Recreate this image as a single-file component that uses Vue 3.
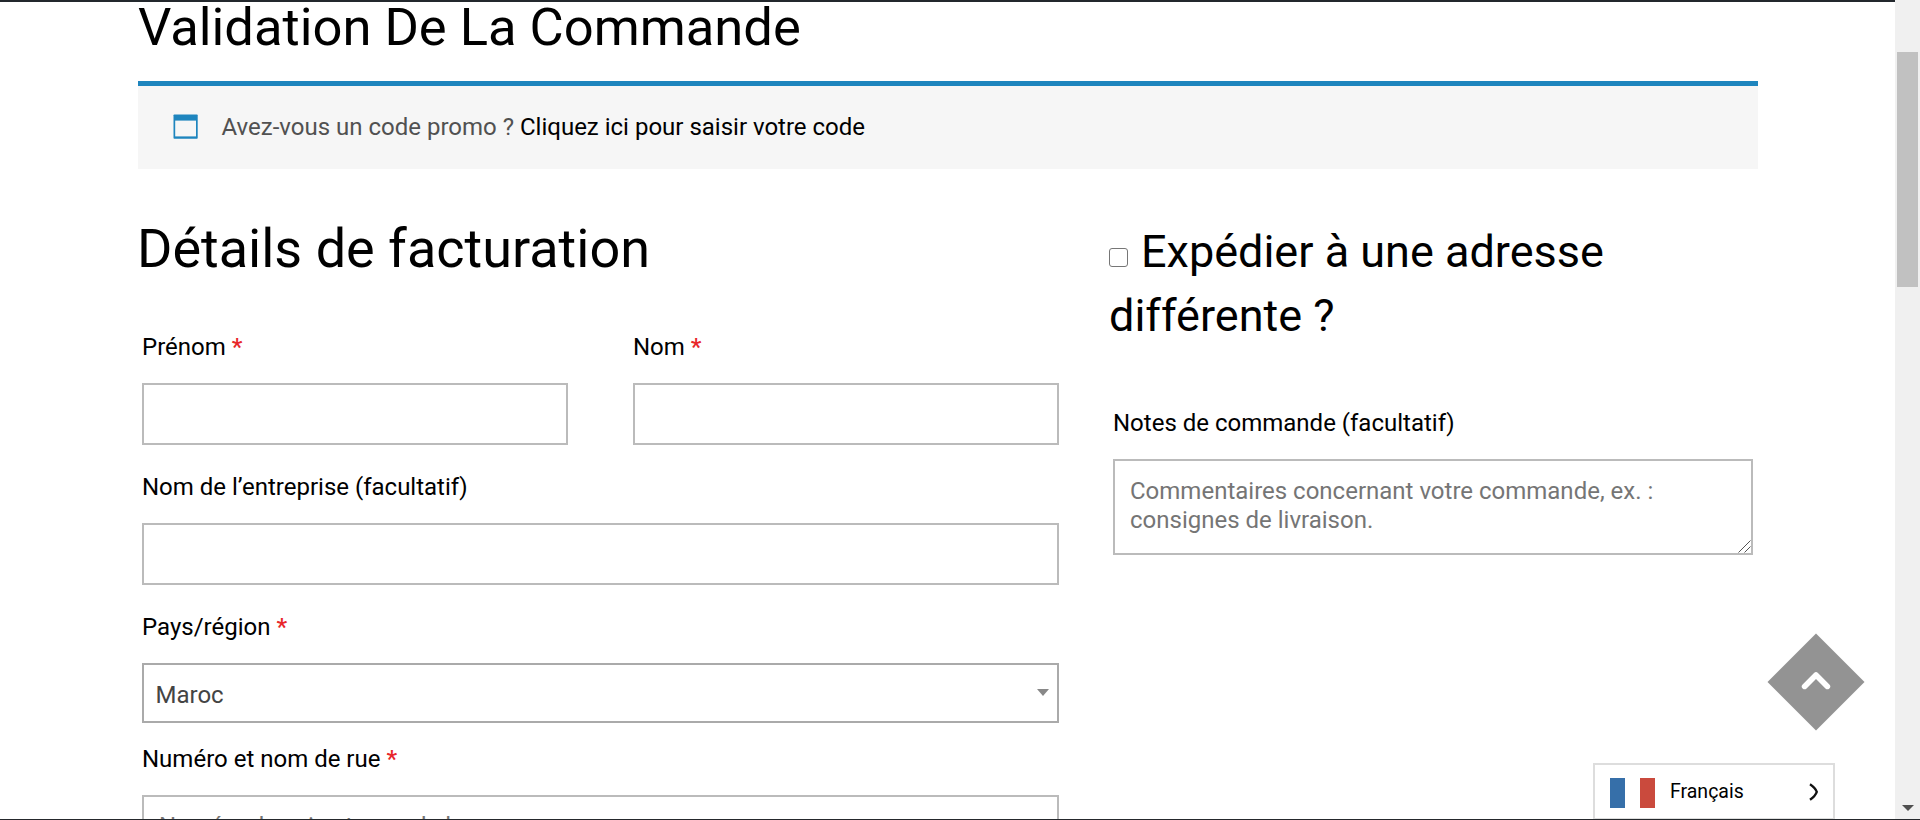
<script setup>
const streetHint = 'Numéro de voie et nom de la rue'
const notesHint = 'Commentaires concernant votre commande, ex. : consignes de livraison.'
</script>

<template>
  <div class="window">
    <div class="page">
      <main class="content">
        <h1 class="title">Validation De La Commande</h1>

        <div class="notice">
          <svg class="notice-icon" width="26" height="26" viewBox="0 0 26 26">
            <rect x="0.5" y="0.5" width="24.2" height="24.2" rx="0.8" fill="#1e85be" />
            <rect x="2.2" y="6.6" width="20.8" height="15.8" fill="#f6f6f6" />
          </svg>
          <p class="notice-text">Avez-vous un code promo ? <a>Cliquez ici pour saisir votre code</a></p>
        </div>

        <div class="columns">
          <section class="billing">
            <h2 class="billing-title">Détails de facturation</h2>
            <div class="pair">
              <div class="field">
                <label>Prénom <b>*</b></label>
                <input type="text" />
              </div>
              <div class="field">
                <label>Nom <b>*</b></label>
                <input type="text" />
              </div>
            </div>
            <div class="field">
              <label>Nom de l’entreprise (facultatif)</label>
              <input type="text" />
            </div>
            <div class="field country">
              <label>Pays/région <b>*</b></label>
              <div class="select">
                <span>Maroc</span>
                <svg width="12" height="7" viewBox="0 0 12 7"><path d="M0 0H12L6 7Z" fill="#888" /></svg>
              </div>
            </div>
            <div class="field">
              <label>Numéro et nom de rue <b>*</b></label>
              <input type="text" :placeholder="streetHint" />
            </div>
          </section>

          <section class="shipping">
            <h3 class="shipping-title"><i class="check"></i>Expédier à une adresse<br />différente ?</h3>
            <div class="field notes">
              <label>Notes de commande (facultatif)</label>
              <textarea :placeholder="notesHint"></textarea>
              <svg class="grip" width="13" height="13" viewBox="0 0 13 13" stroke="#555" stroke-width="1">
                <path d="M0.5 12.5L12.5 0.5M6.5 12.5L12.5 6.5" />
              </svg>
            </div>
          </section>
        </div>
      </main>
    </div>

    <aside class="scrollbar">
      <div class="thumb"></div>
      <svg class="scroll-down" width="12" height="6" viewBox="0 0 12 6"><path d="M0 0H12L6 6Z" fill="#505050" /></svg>
    </aside>

    <div class="topbar"></div>

    <svg class="to-top" width="98" height="98" viewBox="0 0 98 98">
      <path d="M49 0.5L97.5 49L49 97.5L0.5 49Z" fill="#939393" />
      <path d="M37.6 53.4L49 42L60.4 53.4" fill="none" stroke="#fff" stroke-width="5.6" stroke-linecap="round" stroke-linejoin="round" />
    </svg>

    <div class="lang">
      <svg class="flag" width="45" height="30" viewBox="0 0 45 30">
        <path d="M0 0H15V30H0Z" fill="#366fa9" />
        <path d="M15 0H30V30H15Z" fill="#fff" />
        <path d="M30 0H45V30H30Z" fill="#ca4a3d" />
      </svg>
      <span class="lang-name">Français</span>
      <svg class="lang-arrow" width="10" height="18" viewBox="0 0 10 18">
        <path d="M1 1.2C4 3.2 6.8 6 7.8 8.8C6.8 11.8 4 14.6 1 16.8" fill="none" stroke="#111" stroke-width="2.3" />
      </svg>
    </div>

    <div class="bottom-edge"></div>
  </div>
</template>

<style>
html,
body {
  margin: 0;
  overflow: hidden;
}
</style>

<style scoped>
.window {
  position: relative;
  display: flex;
  width: 1920px;
  height: 820px;
  overflow: hidden;
  background: #fff;
  color: #000;
  font-family: Roboto, "Liberation Sans", sans-serif;
  font-size: 24px;
}
.page {
  flex: 1;
  height: 820px;
  overflow: hidden;
}
.content {
  width: 1620px;
  margin-left: 138px;
}
h1,
h2,
h3,
p {
  margin: 0;
  font-weight: 400;
}
.title {
  font-size: 52.5px;
  line-height: 54px;
  white-space: nowrap;
}
.notice {
  display: flex;
  box-sizing: border-box;
  height: 88px;
  margin-top: 27px;
  padding: 24px 0 0 35px;
  border-top: 5px solid #1e85be;
  background: #f6f6f6;
}
.notice-icon {
  margin-top: 4px;
}
.notice-text {
  margin-left: 22.5px;
  line-height: 36px;
  margin-top: -1px;
  color: #515151;
}
.notice-text a {
  color: #000;
}
.columns {
  display: flex;
  gap: 49px;
}
.billing {
  width: 917px;
  margin-left: 4px;
}
.billing-title {
  margin: 50px 0 48px -5px;
  font-size: 54px;
  line-height: 60px;
}
.pair {
  display: grid;
  grid-template-columns: 426px 426px;
  justify-content: space-between;
}
.field {
  display: flex;
  flex-direction: column;
  margin-bottom: 22px;
}
.field.country {
  margin-bottom: 16px;
}
label {
  height: 40px;
  margin-bottom: 16px;
  line-height: 40px;
  white-space: nowrap;
}
label b {
  color: #e8262a;
  font-weight: 500;
}
input,
textarea,
.select {
  box-sizing: border-box;
  width: 100%;
  margin: 0;
  border: 2px solid #bbb;
  border-radius: 0;
  background: #fff;
  color: #000;
  font: 24px Roboto, "Liberation Sans", sans-serif;
  outline: none;
}
input {
  height: 62px;
  padding: 0 15px;
}
input::placeholder,
textarea::placeholder {
  color: #757575;
  opacity: 1;
}
.select {
  display: flex;
  align-items: center;
  justify-content: space-between;
  height: 60px;
  padding: 0 8px 0 11.5px;
  border-color: #aaa;
  color: #444;
}
.select span {
  padding-top: 3px;
}
.select svg {
  margin-bottom: 2px;
}
.shipping {
  width: 648px;
  margin-top: 51px;
}
.shipping-title {
  height: 128px;
  margin-left: 1px;
  font-size: 45px;
  line-height: 64px;
  white-space: nowrap;
}
.check {
  display: inline-block;
  box-sizing: border-box;
  width: 19px;
  height: 19px;
  margin-right: 13px;
  border: 1px solid #767676;
  border-radius: 3px;
  background: #fff;
  vertical-align: 0;
}
.notes {
  position: relative;
  width: 640px;
  margin: 55px 0 0 5px;
}
textarea {
  height: 96px;
  padding: 16px 15px 0;
  line-height: 29px;
  resize: none;
  overflow: hidden;
}
.grip {
  position: absolute;
  right: 2px;
  bottom: 2px;
}
.scrollbar {
  display: flex;
  flex-direction: column;
  align-items: center;
  justify-content: space-between;
  box-sizing: border-box;
  width: 25px;
  height: 820px;
  padding: 52px 0 9px;
  background: #f0f0f0;
}
.thumb {
  width: 21px;
  height: 235px;
  background: #c1c1c1;
}
.topbar {
  position: absolute;
  top: 0;
  left: 0;
  width: 1895px;
  height: 2px;
  background: #23282d;
}
.bottom-edge {
  position: absolute;
  bottom: 0;
  left: 0;
  width: 100%;
  height: 1px;
  background: #25282c;
}
.to-top {
  position: absolute;
  left: 1767px;
  top: 633px;
}
.lang {
  position: absolute;
  left: 1593px;
  top: 763px;
  display: flex;
  box-sizing: border-box;
  width: 242px;
  height: 57px;
  padding: 13px 14px 0 15px;
  border: 2px solid #ddd;
  background: #fff;
}
.lang-name {
  margin: 1px 0 0 15px;
  font-size: 19.5px;
  line-height: 26px;
}
.lang-arrow {
  margin: 5px 0 0 auto;
}
</style>
